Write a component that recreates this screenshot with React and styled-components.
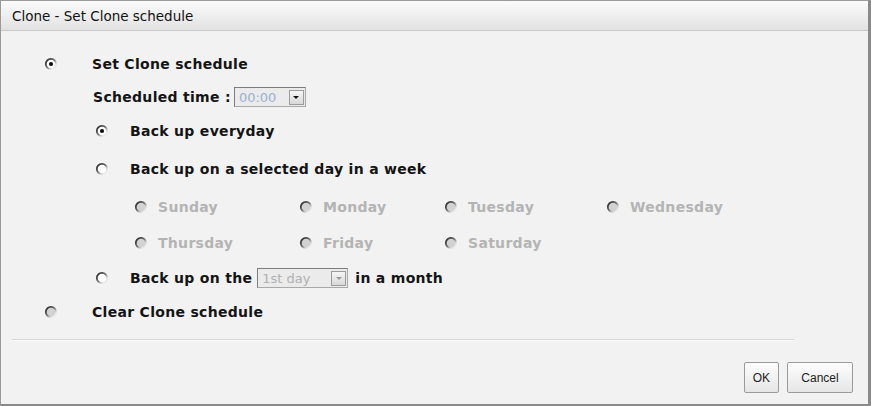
import React from 'react';
import styled, { createGlobalStyle } from 'styled-components';

const Global = createGlobalStyle`
  html, body { margin: 0; padding: 0; background: #f2f2f2; }
  * { box-sizing: border-box; }
`;

const Win = styled.div`
  width: 871px;
  height: 406px;
  display: flex;
  flex-direction: column;
  background: #f2f2f2;
  border-top: 1px solid #9a9a9a;
  border-left: 1px solid #9a9a9a;
  border-right: 3px solid #8a8a8a;
  border-bottom: 2px solid #8a8a8a;
  font-family: "DejaVu Sans", Verdana, sans-serif;
`;

const TitleBar = styled.div`
  height: 30px;
  flex: none;
  display: flex;
  align-items: center;
  padding-left: 11px;
  background: linear-gradient(#fbfbfb, #e2e2e2);
  border-bottom: 1px solid #c8c8c8;
  font-family: "DejaVu Sans", Tahoma, sans-serif;
  font-size: 13.5px;
  color: #111;
`;

const Body = styled.div`
  display: flex;
  flex-direction: column;
  padding: 16px 0 0 43px;
`;

const Row = styled.div`
  display: flex;
  align-items: center;
  height: ${p => p.h || 34}px;
  padding-left: ${p => p.indent || 0}px;
`;

const Label = styled.span`
  font-weight: bold;
  font-size: 14px;
  letter-spacing: 0.3px;
  color: ${p => (p.disabled ? '#b4b4b4' : '#141414')};
  margin-left: ${p => p.gap ?? 0}px;
  white-space: nowrap;
`;

const RadioBox = styled.span`
  display: inline-flex;
  width: 14px;
  height: 14px;
  flex: none;
`;

const Select = styled.div`
  display: inline-flex;
  align-items: center;
  justify-content: space-between;
  width: ${p => p.w}px;
  height: 20px;
  margin: 0 7px 0 ${p => p.ml}px;
  padding: 0 1px 0 4px;
  background: #ebebeb;
  border: 1px solid #a9a9a9;
  border-top-color: #7d7d7d;
  border-left-color: #7d7d7d;
  font-family: "DejaVu Sans", Verdana, sans-serif;
  font-size: 13px;
  color: ${p => p.text};
`;

const Arrow = styled.span`
  width: 15px;
  height: 15px;
  display: flex;
  align-items: center;
  justify-content: center;
  background: linear-gradient(#f6f6f6, #d8d8d8);
  border: 1px solid #9c9c9c;
  &::after {
    content: '';
    border-left: 3px solid transparent;
    border-right: 3px solid transparent;
    border-top: 3px solid ${p => p.c};
  }
`;

const DayGrid = styled.div`
  display: grid;
  grid-template-columns: 165px 145px 162px auto;
  grid-auto-rows: 36px;
  align-items: center;
  padding-left: 90px;
`;

const Day = styled.div`
  display: flex;
  align-items: center;
`;

const Sep = styled.div`
  height: 2px;
  margin: 10px 74px 0 11px;
  background: #d6d6d6;
  border-bottom: 1px solid #fbfbfb;
`;

const Footer = styled.div`
  display: flex;
  justify-content: flex-end;
  gap: 8px;
  padding: 21px 15px 0 0;
`;

const Button = styled.button`
  height: 31px;
  min-width: ${p => p.w}px;
  padding: 0 8px;
  background: linear-gradient(#fdfdfd, #e6e6e6);
  border: 1px solid #9b9b9b;
  border-radius: 2px;
  font-family: "Liberation Sans", Arial, sans-serif;
  font-size: 12px;
  color: #222;
`;

function Radio({ checked, disabled }) {
  const fill = disabled ? '#d2d2d2' : '#ffffff';
  return (
    <RadioBox>
      <svg width="14" height="14" viewBox="0 0 14 14">
        <defs>
          <linearGradient id="rb" x1="0" y1="0" x2="1" y2="1">
            <stop offset="0" stopColor="#1e1e1e" />
            <stop offset="0.45" stopColor="#6a6a6a" />
            <stop offset="0.75" stopColor="#e2e2e2" />
            <stop offset="1" stopColor="#f8f8f8" />
          </linearGradient>
        </defs>
        <circle cx="7" cy="7" r="5.2" fill={fill} stroke="url(#rb)" strokeWidth="1.8" />
        {checked && <circle cx="7" cy="7" r="2.1" fill="#0e0e0e" />}
      </svg>
    </RadioBox>
  );
}

const days = ['Sunday', 'Monday', 'Tuesday', 'Wednesday', 'Thursday', 'Friday', 'Saturday'];

export default function App() {
  return (
    <>
      <Global />
      <Win>
        <TitleBar>Clone - Set Clone schedule</TitleBar>
        <Body>
          <Row h={34}>
            <Radio checked />
            <Label gap={34}>Set Clone schedule</Label>
          </Row>
          <Row h={32} indent={49}>
            <Label>Scheduled time :</Label>
            <Select w={72} ml={3} text="#9bb0cf">
              00:00
              <Arrow c="#111" />
            </Select>
          </Row>
          <Row h={36} indent={51}>
            <Radio checked />
            <Label gap={21}>Back up everyday</Label>
          </Row>
          <Row h={40} indent={51}>
            <Radio />
            <Label gap={21}>Back up on a selected day in a week</Label>
          </Row>
          <DayGrid>
            {days.map(d => (
              <Day key={d}>
                <Radio disabled />
                <Label disabled gap={10}>{d}</Label>
              </Day>
            ))}
          </DayGrid>
          <Row h={34} indent={51}>
            <Radio />
            <Label gap={21}>Back up on the</Label>
            <Select w={91} ml={5} text="#b0b0b0">
              1st day
              <Arrow c="#9a9a9a" />
            </Select>
            <Label>in a month</Label>
          </Row>
          <Row h={34}>
            <Radio disabled />
            <Label gap={34}>Clear Clone schedule</Label>
          </Row>
        </Body>
        <Sep />
        <Footer>
          <Button w={35}>OK</Button>
          <Button w={66}>Cancel</Button>
        </Footer>
      </Win>
    </>
  );
}
